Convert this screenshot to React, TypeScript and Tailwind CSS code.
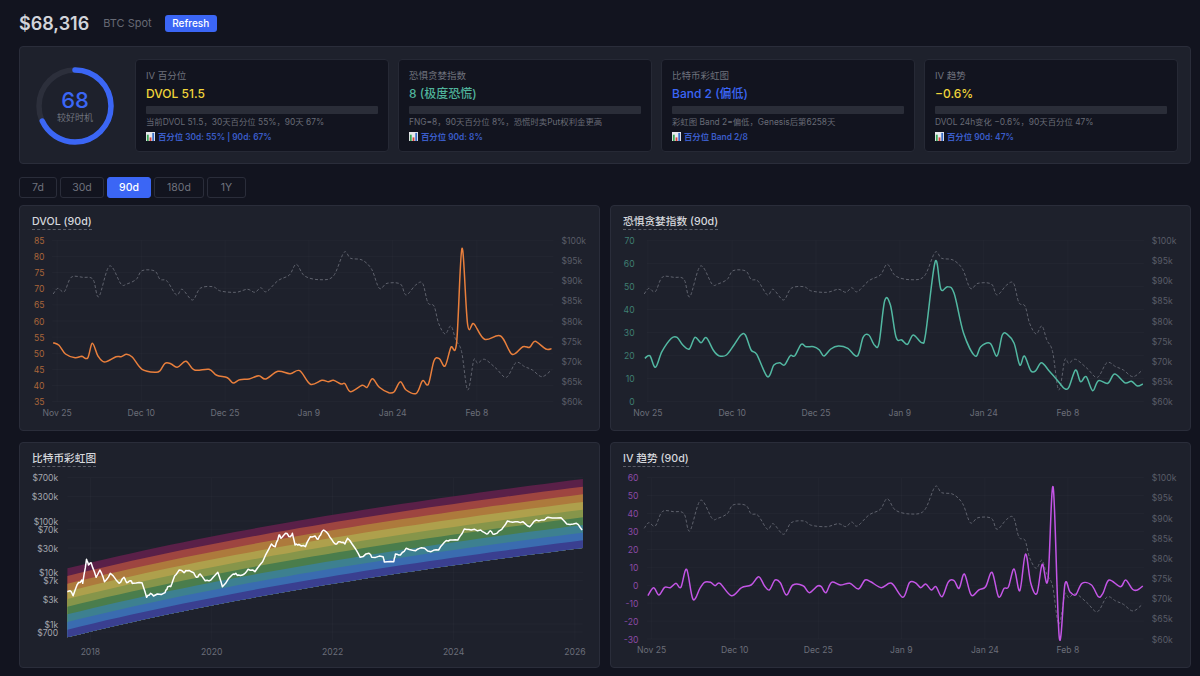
type Pt = [number, number];

const ORANGE: Pt[] = [[113,428],[128,436],[145,462],[170,473],[187,469],[203,474],[215,430],[230,468],[247,486],[277,470],[290,470],[305,463],[320,472],[345,508],[380,517],[392,512],[405,490],[420,491],[437,502],[460,484],[482,510],[520,508],[540,526],[568,533],[583,549],[600,539],[625,537],[650,527],[668,537],[700,514],[732,521],[757,512],[785,553],[815,541],[832,545],[845,541],[865,552],[875,551],[890,575],[920,556],[933,562],[947,536],[965,562],[990,578],[1004,575],[1020,545],[1035,570],[1062,580],[1078,542],[1093,553],[1108,482],[1122,476],[1137,498],[1152,442],[1167,428],[1181,145],[1196,375],[1212,371],[1240,418],[1282,408],[1312,463],[1340,440],[1358,442],[1372,424],[1400,447],[1415,446]];

const BTC: Pt[] = [[113,282],[125,265],[142,275],[160,232],[190,232],[217,238],[232,290],[260,198],[290,252],[305,252],[330,238],[345,212],[378,213],[392,238],[410,243],[435,285],[450,268],[477,300],[497,265],[530,260],[550,273],[590,277],[620,268],[640,277],[655,263],[670,275],[700,242],[730,225],[748,193],[770,228],[810,239],[845,228],[873,157],[890,175],[920,180],[945,208],[965,265],[985,250],[1020,252],[1035,285],[1060,255],[1078,250],[1092,308],[1108,318],[1120,370],[1137,402],[1152,378],[1165,420],[1180,455],[1196,570],[1212,480],[1222,490],[1240,478],[1270,505],[1297,532],[1322,488],[1345,500],[1365,510],[1390,530],[1415,510]];

const GREEN: Pt[] = [[105,475],[118,467],[133,502],[150,455],[175,415],[190,412],[205,435],[222,447],[237,412],[253,428],[267,413],[285,450],[300,467],[320,465],[340,435],[358,405],[370,405],[385,450],[400,463],[428,530],[445,495],[460,488],[473,495],[488,467],[500,467],[517,433],[530,440],[550,440],[565,450],[577,468],[595,447],[615,438],[640,445],[665,468],[680,412],[695,405],[710,435],[722,430],[737,302],[752,315],[767,412],[782,420],[797,433],[812,405],[835,428],[845,400],[870,185],[885,268],[903,260],[920,280],[945,400],[975,468],[990,440],[1015,430],[1033,468],[1047,405],[1060,403],[1078,430],[1093,495],[1105,468],[1122,512],[1135,512],[1150,488],[1170,512],[1195,545],[1210,565],[1222,562],[1240,510],[1253,545],[1268,530],[1285,572],[1300,542],[1325,550],[1343,522],[1370,548],[1387,544],[1403,558],[1417,552]];

const PURPLE: Pt[] = [[113,467],[128,443],[142,465],[157,442],[172,443],[187,430],[200,442],[215,388],[232,478],[250,445],[262,427],[278,427],[290,437],[303,430],[333,467],[360,443],[385,435],[405,410],[420,437],[433,450],[448,420],[462,428],[478,465],[495,435],[522,437],[538,458],[560,438],[570,440],[582,458],[597,427],[620,435],[645,430],[668,447],[685,420],[700,425],[728,443],[755,430],[785,472],[802,428],[818,428],[832,443],[845,432],[860,450],[872,440],[888,470],[905,425],[920,422],[933,445],[947,402],[965,465],[985,450],[1003,440],[1020,397],[1037,470],[1052,445],[1063,441],[1078,387],[1093,452],[1108,342],[1122,430],[1138,460],[1152,373],[1167,420],[1181,142],[1197,593],[1212,432],[1225,455],[1240,465],[1257,430],[1282,435],[1300,470],[1312,460],[1328,420],[1358,440],[1372,420],[1390,448],[1403,450],[1417,438]];

const WHITE: Pt[] = [[150,455],[157,452],[165,467],[175,435],[188,420],[190,430],[200,358],[205,375],[212,368],[225,412],[235,390],[247,425],[262,400],[285,430],[298,412],[305,428],[315,422],[322,430],[345,428],[357,472],[367,460],[375,468],[405,458],[412,440],[420,440],[430,408],[442,390],[455,398],[462,392],[480,398],[487,412],[497,402],[510,422],[525,420],[543,397],[555,440],[580,405],[590,400],[597,405],[612,402],[622,388],[640,395],[660,365],[683,312],[693,320],[703,285],[708,295],[720,280],[733,290],[738,280],[745,315],[755,313],[772,320],[785,290],[797,288],[805,298],[815,275],[822,272],[835,290],[850,312],[862,305],[875,312],[882,295],[900,322],[915,352],[938,340],[945,352],[975,350],[978,366],[1003,365],[1007,342],[1020,345],[1035,325],[1060,332],[1075,323],[1100,335],[1120,330],[1135,307],[1150,300],[1170,300],[1187,267],[1205,270],[1230,270],[1245,282],[1255,272],[1265,283],[1285,268],[1300,243],[1320,245],[1340,245],[1358,260],[1375,240],[1395,240],[1405,232],[1440,233],[1455,252],[1480,250],[1495,270]];

const BANDS = ["#5a2048", "#9e4540", "#ad7a3c", "#aea04c", "#86954a", "#4a7d4c", "#3d8090", "#3a6cb0", "#3a3f90"];

const DATES = ["Nov 25", "Dec 10", "Dec 25", "Jan 9", "Jan 24", "Feb 8"];
const BTC_TICKS = ["$100k", "$95k", "$90k", "$85k", "$80k", "$75k", "$70k", "$65k", "$60k"];

// smooth line through the points
function smooth(p: Pt[]) {
  let d = `M${p[0][0].toFixed(1)} ${p[0][1].toFixed(1)}`;
  for (let i = 0; i < p.length - 1; i++) {
    const a = p[Math.max(i - 1, 0)];
    const b = p[i];
    const c = p[i + 1];
    const e = p[Math.min(i + 2, p.length - 1)];
    const x1 = b[0] + (c[0] - a[0]) / 6;
    const y1 = b[1] + (c[1] - a[1]) / 6;
    const x2 = c[0] - (e[0] - b[0]) / 6;
    const y2 = c[1] - (e[1] - b[1]) / 6;
    d += `C${x1.toFixed(1)} ${y1.toFixed(1)} ${x2.toFixed(1)} ${y2.toFixed(1)} ${c[0].toFixed(1)} ${c[1].toFixed(1)}`;
  }
  return d;
}

function ChartCard({ title, children }: { title: string; children: React.ReactNode }) {
  return (
    <div className="flex h-[226px] flex-col rounded-[4px] border border-[#2a2d3a] bg-[#1e212c]">
      <div className="h-[27px] px-3 pt-[8px]">
        <span className="block w-fit border-b border-dashed border-[#5a5d68] text-[10.7px] leading-[15px] font-medium text-[#d5d7dc]">
          {title}
        </span>
      </div>
      {children}
    </div>
  );
}

interface TimeChartProps {
  title: string;
  line: Pt[];
  color: string;
  axisColor: string;
  yTicks: string[];
  sx: number;
  ox: number;
  oy: number;
  labelX: number;
  dateX: number[];
}

function TimeChart({ title, line, color, axisColor, yTicks, sx, ox, oy, labelX, dateX }: TimeChartProps) {
  const lx = (z: number) => z / sx - ox;
  const ly = (z: number) => z / 3 - oy;
  const top = oy === 33 ? 121 : 113;
  const bottom = top + 484;
  const tickY = (i: number, n: number) => ly(top + ((bottom - top) * i) / (n - 1));
  const left = lx(110);
  const right = lx(1420);
  return (
    <ChartCard title={title}>
      <svg viewBox="0 0 579 197" className="block h-[197px] w-full">
        {yTicks.map((t, i) => (
          <g key={t}>
            <line x1={left} x2={right} y1={tickY(i, yTicks.length)} y2={tickY(i, yTicks.length)} stroke="#ffffff" strokeOpacity="0.025" />
            <text x={lx(labelX)} y={tickY(i, yTicks.length) + 3.5} fill={axisColor} textAnchor="end" className="text-[8.6px]">
              {t}
            </text>
          </g>
        ))}
        {BTC_TICKS.map((t, i) => (
          <text key={t} x={lx(1441)} y={tickY(i, BTC_TICKS.length) + 3.5} fill="#595c67" className="text-[8.6px]">
            {t}
          </text>
        ))}
        {DATES.map((t, i) => (
          <g key={t}>
            <line x1={lx(dateX[i])} x2={lx(dateX[i])} y1={ly(top)} y2={ly(bottom)} stroke="#ffffff" strokeOpacity="0.025" />
            <text x={lx(dateX[i])} y={ly(bottom + 43)} fill="#6b6e79" textAnchor="middle" className="text-[8.6px]">
              {t}
            </text>
          </g>
        ))}
        <path
          d={smooth(BTC.map(([x, y]) => [x / 2.613 - 10, y / 3 - (oy === 33 ? 33 : 33 + 8 / 3)] as Pt))}
          fill="none"
          stroke="#5f626d"
          strokeWidth="1"
          strokeDasharray="3 2"
        />
        <path d={smooth(line.map(([x, y]) => [lx(x), ly(y)] as Pt))} fill="none" stroke={color} strokeWidth="1.5" strokeLinejoin="round" />
      </svg>
    </ChartCard>
  );
}

function RainbowChart() {
  const lx = (z: number) => z / 2.613 - 10;
  const ly = (z: number) => z / 3 - 30;
  const edge = (z: number, i: number) => {
    const t = (z - 150) / 1347;
    return 385 - (268 * Math.log(1 + t)) / Math.log(2) + i * 23;
  };
  const xs = Array.from({ length: 41 }, (_, i) => 150 + (1347 * i) / 40);
  // daily price wobble between the traced points
  let seed = 7;
  const noise = () => {
    seed = (seed * 9301 + 49297) % 233280;
    return seed / 233280 - 0.5;
  };
  const price: string[] = [];
  WHITE.forEach((p, i) => {
    const n = WHITE[i + 1];
    price.push(`${lx(p[0]).toFixed(1)},${ly(p[1]).toFixed(1)}`);
    if (!n) return;
    for (let k = 1; k < 3; k++) {
      const x = p[0] + ((n[0] - p[0]) * k) / 3;
      const y = p[1] + ((n[1] - p[1]) * k) / 3 + noise() * 6;
      price.push(`${lx(x).toFixed(1)},${ly(y).toFixed(1)}`);
    }
  });
  const ticks: [string, number][] = [["$700k", 113], ["$300k", 170], ["$100k", 243], ["$70k", 268], ["$30k", 324], ["$10k", 397], ["$7k", 422], ["$3k", 478], ["$1k", 552], ["$700", 576]];
  const years: [string, number][] = [["2018", 210], ["2020", 527], ["2022", 843], ["2024", 1159], ["2026", 1476]];
  return (
    <ChartCard title="比特币彩虹图">
      <svg viewBox="0 0 579 197" className="block h-[197px] w-full">
        {ticks.map(([t, z]) => (
          <g key={t}>
            <line x1={lx(150)} x2={lx(1497)} y1={ly(z)} y2={ly(z)} stroke="#ffffff" strokeOpacity="0.025" />
            <text x={lx(126)} y={ly(z) + 3.5} fill="#a4a6ae" textAnchor="end" className="text-[8.6px]">
              {t}
            </text>
          </g>
        ))}
        {years.map(([t, z]) => (
          <g key={t}>
            <line x1={lx(z)} x2={lx(z)} y1={ly(113)} y2={ly(600)} stroke="#ffffff" strokeOpacity="0.025" />
            <text x={lx(z)} y={ly(646)} fill="#6b6e79" textAnchor="middle" className="text-[8.6px]">
              {t}
            </text>
          </g>
        ))}
        {/* each band runs down to the bottom edge so no seams show between them */}
        {BANDS.map((c, i) => {
          const upper = xs.map((x) => `${lx(x).toFixed(1)},${ly(edge(x, i)).toFixed(1)}`);
          const lower = [...xs].reverse().map((x) => `${lx(x).toFixed(1)},${ly(edge(x, BANDS.length)).toFixed(1)}`);
          return <polygon key={c} points={[...upper, ...lower].join(" ")} fill={c} />;
        })}
        <polyline points={price.join(" ")} fill="none" stroke="#ffffff" strokeWidth="1.5" strokeLinejoin="round" />
      </svg>
    </ChartCard>
  );
}

function ChartIcon() {
  return (
    <svg viewBox="0 0 10 10" className="mr-[3px] inline-block h-[9px] w-[9px] align-[-1px]">
      <rect width="10" height="10" fill="#e8e8ec" />
      <rect x="1" y="3" width="2" height="7" fill="#3aa657" />
      <rect x="4" y="6" width="2" height="4" fill="#d9413c" />
      <rect x="7" y="1" width="2" height="9" fill="#3a6fc9" />
    </svg>
  );
}

interface MetricProps {
  label: string;
  value: string;
  valueColor: string;
  desc: string;
  link: string;
}

function Metric({ label, value, valueColor, desc, link }: MetricProps) {
  return (
    <div className="h-[93px] rounded-[4px] border border-[#262935] bg-[#12141f] px-[10px] pt-[9px]">
      <div className="text-[9.5px] leading-[14px] text-[#6f727d]">{label}</div>
      <div className={`mt-[2px] text-[12px] leading-[18px] font-medium ${valueColor}`}>{value}</div>
      <div className="mt-[3px] h-[8px] rounded-[1px] bg-[#2a2d38]" />
      <div className="mt-[2px] text-[8.4px] leading-[13px] text-[#686b76]">{desc}</div>
      <div className="mt-[2px] text-[8.4px] leading-[13px] font-semibold text-[#3a5cc8]">
        <ChartIcon />
        {link}
      </div>
    </div>
  );
}

function Gauge() {
  const r = 36;
  const c = 2 * Math.PI * r;
  return (
    <div className="relative h-[78px] w-[78px]">
      <svg viewBox="0 0 78 78" className="h-[78px] w-[78px] -rotate-90">
        <circle cx="39" cy="39" r={r} fill="none" stroke="#2c2f3b" strokeWidth="5.5" />
        <circle cx="39" cy="39" r={r} fill="none" stroke="#3b66f5" strokeWidth="5.5" strokeLinecap="round" strokeDasharray={`${c * 0.68} ${c}`} />
      </svg>
      <div className="absolute inset-0 flex flex-col items-center justify-center">
        <span className="text-[22px] leading-[24px] font-medium text-[#3b66f5]">68</span>
        <span className="text-[9px] leading-[12px] text-[#6f727d]">较好时机</span>
      </div>
    </div>
  );
}

export default function App() {
  const ranges = ["7d", "30d", "90d", "180d", "1Y"];
  const widths = ["w-[38px]", "w-[44px]", "w-[44px]", "w-[50px]", "w-[39px]"];
  return (
    <div className="h-[676px] overflow-hidden bg-[#12141f] pr-[9px] pl-[19px] font-['Inter','Noto_Sans_CJK_SC',sans-serif]">
      <header className="flex h-[46px] items-center">
        <span className="text-[18px] font-semibold text-[#d2d4da]">$68,316</span>
        <span className="ml-[14px] text-[11px] text-[#666974]">BTC Spot</span>
        <button className="ml-[13px] h-[17px] w-[52px] rounded-[3px] bg-[#3b66f5] text-[10px] font-medium text-white">Refresh</button>
      </header>

      <section className="flex h-[118px] items-start rounded-[4px] border border-[#2a2d3a] bg-[#1e212c] pt-[12px] pr-[12px] pl-[16px]">
        <div className="mt-[8px] mr-[21px] shrink-0">
          <Gauge />
        </div>
        <div className="grid flex-1 grid-cols-4 gap-[9px]">
          <Metric label="IV 百分位" value="DVOL 51.5" valueColor="text-[#f0d43a]" desc="当前DVOL 51.5，30天百分位 55%，90天 67%" link="百分位 30d: 55% | 90d: 67%" />
          <Metric label="恐惧贪婪指数" value="8 (极度恐慌)" valueColor="text-[#4fb39b]" desc="FNG=8，90天百分位 8%，恐慌时卖Put权利金更高" link="百分位 90d: 8%" />
          <Metric label="比特币彩虹图" value="Band 2 (偏低)" valueColor="text-[#3b66f5]" desc="彩虹图 Band 2=偏低，Genesis后第6258天" link="百分位 Band 2/8" />
          <Metric label="IV 趋势" value="−0.6%" valueColor="text-[#f0d43a]" desc="DVOL 24h变化 −0.6%，90天百分位 47%" link="百分位 90d: 47%" />
        </div>
      </section>

      <nav className="mt-[13px] flex h-[21px] gap-[3px]">
        {ranges.map((r, i) => (
          <button
            key={r}
            className={`${widths[i]} rounded-[3px] border text-[10.5px] ${
              r === "90d" ? "border-[#3b66f5] bg-[#3b66f5] font-medium text-white" : "border-[#2a2d3a] text-[#6f727d]"
            }`}
          >
            {r}
          </button>
        ))}
      </nav>

      <main className="mt-[7px] grid grid-cols-2 gap-x-[10px] gap-y-[11px]">
        <TimeChart
          title="DVOL (90d)"
          line={ORANGE}
          color="#e97f3c"
          axisColor="#a9653a"
          yTicks={["85", "80", "75", "70", "65", "60", "55", "50", "45", "40", "35"]}
          sx={2.613}
          ox={10}
          oy={33}
          labelX={90}
          dateX={[123, 343, 562, 781, 1000, 1220]}
        />
        <TimeChart
          title="恐惧贪婪指数 (90d)"
          line={GREEN}
          color="#52b8a2"
          axisColor="#3f7f72"
          yTicks={["70", "60", "50", "40", "30", "20", "10", "0"]}
          sx={2.635}
          ox={6}
          oy={33}
          labelX={78}
          dateX={[113, 335, 556, 777, 998, 1220]}
        />
        <RainbowChart />
        <TimeChart
          title="IV 趋势 (90d)"
          line={PURPLE}
          color="#c455e6"
          axisColor="#8c4aa6"
          yTicks={["60", "50", "40", "30", "20", "10", "0", "-10", "-20", "-30"]}
          sx={2.635}
          ox={6}
          oy={30}
          labelX={88}
          dateX={[123, 342, 562, 781, 1001, 1220]}
        />
      </main>
    </div>
  );
}
